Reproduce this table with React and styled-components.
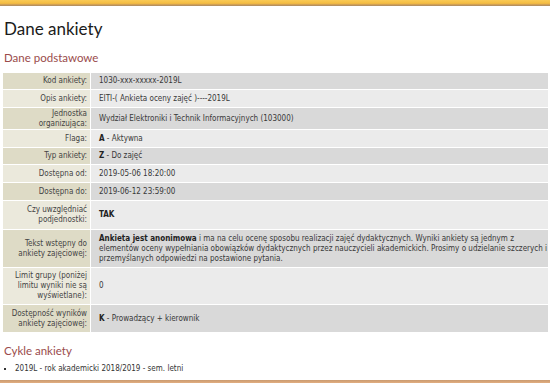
import styled, { createGlobalStyle } from "styled-components";

const GlobalStyle = createGlobalStyle`
  html, body {
    margin: 0;
    padding: 0;
    background: #fff;
  }

  body {
    font-family: "DejaVu Sans Condensed", "DejaVu Sans", sans-serif;
    font-stretch: condensed;
    color: #333;
  }
`;

const Page = styled.div`
  width: 550px;
  height: 384px;
  display: flex;
  flex-direction: column;
  overflow: hidden;
`;

const TopBar = styled.div`
  height: 6px;
  flex-shrink: 0;
  background: linear-gradient(#f9ca55 0%, #f4bc42 55%, #c99a58 80%, #a98a62 100%);
`;

const Content = styled.main`
  flex: 1;
  padding: 0 3px;
`;

const Title = styled.h1`
  margin: 12px 0 0 1px;
  font-family: Lato, "Open Sans", sans-serif;
  font-weight: 400;
  font-size: 17px;
  line-height: 22px;
  color: #1b1b1b;
`;

const SectionTitle = styled.h2`
  margin: ${(p) => p.$top}px 0 0 1px;
  font-family: Lato, "Open Sans", sans-serif;
  font-weight: 400;
  font-size: 11.5px;
  line-height: 15px;
  color: #9a4b4b;
`;

const Table = styled.div`
  margin-top: 8px;
  width: 545px;
  font-size: 8px;
  line-height: 10px;
`;

const Row = styled.div`
  display: grid;
  grid-template-columns: 88px 1fr;
  height: ${(p) => p.$h}px;
`;

const Label = styled.div`
  display: flex;
  align-items: center;
  justify-content: flex-end;
  text-align: right;
  padding-right: 3px;
  border-right: 1px solid #fff;
  border-bottom: 1px solid #fff;
  background: ${(p) => (p.$alt ? "#ebe9dc" : "#dedbc6")};
  color: #444;
`;

const Value = styled.div`
  display: flex;
  align-items: center;
  padding: 0 0 0 8px;
  border-bottom: 1px solid #fff;
  background: ${(p) => (p.$alt ? "#ebebeb" : "#d9d9d9")};
  color: #383838;

  strong {
    color: #222;
  }
`;

const Lead = styled.strong`
  font-size: 8px;
  line-height: 10px;
`;

const CycleList = styled.ul`
  margin: 6px 0 0 0;
  padding: 0 0 0 12px;
  font-size: 8px;
  line-height: 10px;
  color: #333;

  li {
    list-style: square;
  }
`;

const BottomRule = styled.div`
  height: 3px;
  flex-shrink: 0;
  margin-bottom: 1px;
  background: linear-gradient(#c99a70, #e2ae80);
`;

const rows = [
  { label: "Kod ankiety:", value: "1030-xxx-xxxxx-2019L", h: 17 },
  { label: "Opis ankiety:", value: "EITI-( Ankieta oceny zajęć )----2019L", h: 18 },
  {
    label: "Jednostka organizująca:",
    value: "Wydział Elektroniki i Technik Informacyjnych (103000)",
    h: 22,
  },
  { label: "Flaga:", code: "A", value: "Aktywna", h: 18 },
  { label: "Typ ankiety:", code: "Z", value: "Do zajęć", h: 17 },
  { label: "Dostępna od:", value: "2019-05-06 18:20:00", h: 18 },
  { label: "Dostępna do:", value: "2019-06-12 23:59:00", h: 18 },
  { label: "Czy uwzględniać podjednostki:", bold: "TAK", h: 29 },
  { label: "Tekst wstępny do ankiety zajęciowej:", intro: true, h: 38 },
  { label: "Limit grupy (poniżej limitu wyniki nie są wyświetlane):", value: "0", h: 37 },
  {
    label: "Dostępność wyników ankiety zajęciowej:",
    code: "K",
    value: "Prowadzący + kierownik",
    h: 28,
  },
];

const renderValue = (row) => {
  if (row.intro) {
    return (
      <span>
        <Lead>Ankieta jest anonimowa</Lead> i ma na celu ocenę sposobu realizacji
        zajęć dydaktycznych. Wyniki ankiety są jednym z elementów oceny
        wypełniania obowiązków dydaktycznych przez nauczycieli akademickich.
        Prosimy o udzielanie szczerych i przemyślanych odpowiedzi na postawione
        pytania.
      </span>
    );
  }

  if (row.bold) {
    return <strong>{row.bold}</strong>;
  }

  if (row.code) {
    return (
      <span>
        <strong>{row.code}</strong> - {row.value}
      </span>
    );
  }

  return <span>{row.value}</span>;
};

const App = () => {
  return (
    <Page>
      <GlobalStyle />
      <TopBar />

      <Content>
        <Title>Dane ankiety</Title>
        <SectionTitle $top={10}>Dane podstawowe</SectionTitle>

        <Table>
          {rows.map((row, i) => (
            <Row key={row.label} $h={row.h}>
              <Label $alt={i % 2 === 1}>{row.label}</Label>
              <Value $alt={i % 2 === 1}>{renderValue(row)}</Value>
            </Row>
          ))}
        </Table>

        <SectionTitle $top={10}>Cykle ankiety</SectionTitle>

        <CycleList>
          <li>2019L - rok akademicki 2018/2019 - sem. letni</li>
        </CycleList>
      </Content>

      <BottomRule />
    </Page>
  );
};

export default App;
